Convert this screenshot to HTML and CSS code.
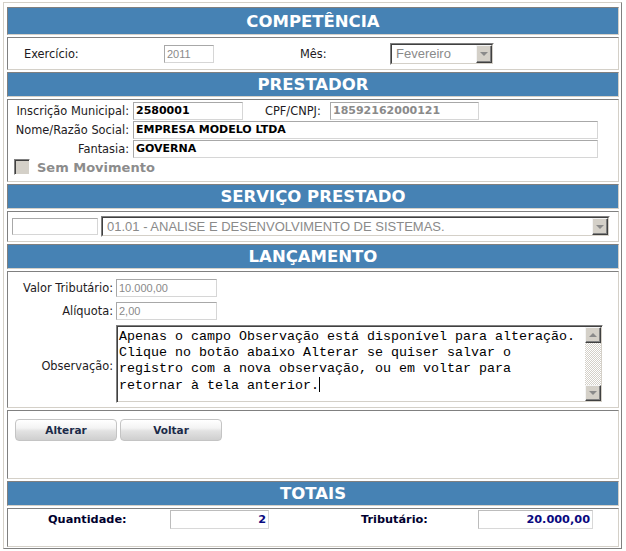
FILE: index.html
```html
<!DOCTYPE html>
<html lang="pt-BR">
<head>
<meta charset="utf-8">
<title>Lançamento</title>
<link rel="stylesheet" href="styles.css">
</head>
<body>
<div class="frame">
  <div class="hdr hdr-first">COMPETÊNCIA</div>
  <div class="box box-comp">
    <span class="lbl">Exercício:</span>
    <span class="inp inp-dis inp-ano">2011</span>
    <span class="lbl">Mês:</span>
    <div class="sel sel-mes"><div class="sel-in"><span class="sel-text">Fevereiro</span><span class="sel-btn"><i class="tri-down"></i></span></div></div>
  </div>

  <div class="hdr">PRESTADOR</div>
  <div class="box box-prest">
    <div class="frow">
      <span class="flbl">Inscrição Municipal:</span>
      <span class="inp inp-bold inp-im">2580001</span>
      <span class="lbl lbl-cpf">CPF/CNPJ:</span>
      <span class="inp inp-bold inp-gray inp-cpf">18592162000121</span>
    </div>
    <div class="frow">
      <span class="flbl">Nome/Razão Social:</span>
      <span class="inp inp-bold inp-wide">EMPRESA MODELO LTDA</span>
    </div>
    <div class="frow">
      <span class="flbl">Fantasia:</span>
      <span class="inp inp-bold inp-wide">GOVERNA</span>
    </div>
    <div class="frow frow-check">
      <span class="chk"></span>
      <span class="chk-lbl">Sem Movimento</span>
    </div>
  </div>

  <div class="hdr">SERVIÇO PRESTADO</div>
  <div class="box box-serv">
    <span class="inp inp-cod"></span>
    <div class="sel sel-serv"><div class="sel-in"><span class="sel-text">01.01 - ANALISE E DESENVOLVIMENTO DE SISTEMAS.</span><span class="sel-btn"><i class="tri-down"></i></span></div></div>
  </div>

  <div class="hdr">LANÇAMENTO</div>
  <div class="box box-lanc">
    <span class="llbl">Valor Tributário:</span>
    <span class="inp inp-dis inp-num">10.000,00</span>
    <span class="llbl">Alíquota:</span>
    <span class="inp inp-dis inp-num">2,00</span>
    <span class="llbl llbl-obs">Observação:</span>
    <div class="tarea">
      <div class="tarea-text">Apenas o campo Observação está disponível para alteração.
Clique no botão abaixo Alterar se quiser salvar o
registro com a nova observação, ou em voltar para
retornar à tela anterior.<span class="caret"></span></div>
      <div class="sbar">
        <span class="sbtn"><i class="tri-up"></i></span>
        <span class="strack"></span>
        <span class="sbtn"><i class="tri-down"></i></span>
      </div>
    </div>
  </div>

  <div class="box box-btns">
    <button class="btn" type="button">Alterar</button>
    <button class="btn" type="button">Voltar</button>
  </div>

  <div class="hdr">TOTAIS</div>
  <div class="box box-tot">
    <span class="tlbl tlbl-1">Quantidade:</span>
    <span class="inp tinp tinp-1">2</span>
    <span class="tlbl tlbl-2">Tributário:</span>
    <span class="inp tinp tinp-2">20.000,00</span>
  </div>
</div>
</body>
</html>
```
FILE: styles.css
```css
* { box-sizing: border-box; }
html, body { margin: 0; padding: 0; background: #fff; }
body {
  font-family: "DejaVu Sans", Verdana, sans-serif;
  font-size: 11.4px;
  color: #221a22;
}

.frame {
  margin: 2px 0 0 3px;
  width: 619px;
  height: 547px;
  border: 1px solid;
  border-color: #d4d0c8 #808080 #808080 #d4d0c8;
  padding: 4px 2px 1px 3px;
  display: flex;
  flex-direction: column;
  gap: 2px;
}

.hdr {
  height: 25px;
  flex: none;
  background: #4682b4;
  border: 1px solid;
  border-color: #808080 #d4d0c8 #d4d0c8 #808080;
  color: #fff;
  font-weight: bold;
  font-size: 16.5px;
  display: flex;
  align-items: center;
  justify-content: center;
}
.hdr-first { height: 28px; }

.box {
  flex: none;
  background: #fff;
  border: 1px solid;
  border-color: #808080 #d4d0c8 #d4d0c8 #808080;
}

/* generic input look */
.inp {
  display: block;
  height: 18px;
  border: 1px solid;
  border-color: #a8a8a8 #d6d6d6 #d6d6d6 #a8a8a8;
  background: #fff;
  padding: 0 2px;
  line-height: 16px;
  white-space: nowrap;
  overflow: hidden;
}
.inp-dis {
  font-family: "Liberation Sans", Arial, sans-serif;
  font-size: 11px;
  color: #8a8a8a;
}
.inp-bold {
  font-size: 11px;
  font-weight: bold;
  color: #000;
}
.inp-gray { color: #8a8a8a; }

/* COMPETÊNCIA */
.box-comp {
  height: 33px;
  display: grid;
  grid-template-columns: 140px 136px 90px 104px;
  align-items: center;
  padding-left: 16px;
}
.inp-ano { width: 50px; }

/* select */
.sel {
  height: 22px;
  border: 1px solid;
  border-color: #808080 #fff #fff #808080;
}
.sel-in {
  height: 100%;
  display: flex;
  border: 1px solid;
  border-color: #404040 #d4d0c8 #d4d0c8 #404040;
  background: #fff;
}
.sel-text {
  flex: 1;
  font-family: "Liberation Sans", Arial, sans-serif;
  font-size: 13px;
  color: #8a8a8a;
  line-height: 18px;
  padding-left: 4px;
  white-space: nowrap;
  overflow: hidden;
}
.sel-btn {
  width: 16px;
  flex: none;
  background: #d4d0c8;
  border: 1px solid;
  border-color: #f4f4f4 #404040 #404040 #f4f4f4;
  box-shadow: inset -1px -1px 0 #808080;
  display: flex;
  align-items: center;
  justify-content: center;
}
.tri-down {
  width: 0; height: 0;
  border-left: 4px solid transparent;
  border-right: 4px solid transparent;
  border-top: 4px solid #8a8a8a;
}
.tri-up {
  width: 0; height: 0;
  border-left: 4px solid transparent;
  border-right: 4px solid transparent;
  border-bottom: 4px solid #8a8a8a;
}
.sel-mes { width: 104px; }

/* PRESTADOR */
.box-prest {
  height: 83px;
  padding-top: 2px;
  display: flex;
  flex-direction: column;
  gap: 1px;
}
.frow {
  display: flex;
  align-items: center;
  height: 18px;
}
.flbl {
  width: 121px;
  margin-right: 4px;
  text-align: right;
  white-space: nowrap;
}
.inp-im { width: 110px; }
.lbl-cpf { width: 65px; margin-left: 22px; white-space: nowrap; }
.inp-cpf { width: 149px; }
.inp-wide { width: 465px; }
.frow-check { height: 16px; }
.chk {
  width: 16px; height: 16px;
  margin-left: 6px;
  background: #d4d0c8;
  border: 1px solid;
  border-color: #808080 #fff #fff #808080;
  box-shadow: inset 1px 1px 0 #404040, inset -1px -1px 0 #d4d0c8;
}
.chk-lbl {
  margin-left: 7px;
  font-size: 13px;
  font-weight: bold;
  color: #8c8c8c;
}

/* SERVIÇO */
.box-serv {
  height: 31px;
  display: flex;
  align-items: center;
  padding-left: 4px;
}
.inp-cod { width: 86px; height: 17px; margin-right: 3px; }
.sel-serv { width: 509px; height: 21px; }

/* LANÇAMENTO */
.box-lanc {
  height: 137px;
  display: grid;
  grid-template-columns: 105px 487px;
  grid-template-rows: 18px 18px 78px;
  column-gap: 3px;
  row-gap: 5px;
  align-items: center;
  padding-top: 7px;
}
.llbl { text-align: right; white-space: nowrap; }
.llbl-obs { padding-top: 4px; }
.inp-num { width: 101px; }
.tarea {
  height: 78px;
  display: flex;
  border: 1px solid;
  border-color: #808080 #fff #fff #808080;
  box-shadow: inset 1px 1px 0 #404040, inset -1px -1px 0 #d4d0c8;
  padding: 1px;
  background: #fff;
}
.tarea-text {
  flex: 1;
  white-space: pre;
  font-family: "Liberation Mono", "Courier New", monospace;
  font-size: 13.33px;
  line-height: 16px;
  color: #000;
  padding: 2px 0 0 1px;
  overflow: hidden;
}
.caret {
  display: inline-block;
  width: 0;
  height: 15px;
  border-left: 1px solid #000;
  vertical-align: -3px;
}
.sbar {
  width: 16px;
  display: flex;
  flex-direction: column;
}
.sbtn {
  height: 16px;
  flex: none;
  background: #d4d0c8;
  border: 1px solid;
  border-color: #f4f4f4 #404040 #404040 #f4f4f4;
  box-shadow: inset -1px -1px 0 #808080;
  display: flex;
  align-items: center;
  justify-content: center;
}
.strack {
  flex: 1;
  background: repeating-conic-gradient(#d4d0c8 0 25%, #fff 0 50%) 0 0 / 2px 2px;
}

/* buttons */
.box-btns {
  height: 69px;
  display: flex;
  align-items: flex-start;
  gap: 3px;
  padding: 8px 0 0 7px;
}
.btn {
  width: 102px;
  height: 22px;
  border: 1px solid #c4c4c4;
  border-radius: 4px;
  background: linear-gradient(to bottom, #ffffff 0%, #f3f3f3 40%, #e2e2e2 55%, #cfcfcf 100%);
  font-family: "DejaVu Sans", Verdana, sans-serif;
  font-size: 10.5px;
  font-weight: bold;
  color: #1b2a48;
  padding: 0;
}

/* TOTAIS */
.box-tot {
  height: 39px;
  display: grid;
  grid-template-columns: 162px 99px 209px 115px;
  grid-template-rows: 19px;
  align-items: center;
  padding-top: 1px;
}
.tlbl {
  font-size: 11.3px;
  font-weight: bold;
  color: #00002e;
  white-space: nowrap;
}
.tlbl-1 { padding-left: 40px; }
.tlbl-2 { padding-left: 92px; }
.tinp {
  height: 19px;
  border-color: #bcbcbc #d8d8d8 #d8d8d8 #bcbcbc;
  text-align: right;
  font-size: 11.3px;
  font-weight: bold;
  color: #0a0a80;
  line-height: 17px;
}
```
